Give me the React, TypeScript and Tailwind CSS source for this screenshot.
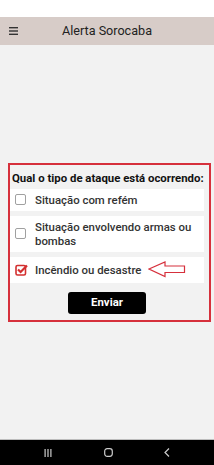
import React from 'react';

const options = [
  { label: 'Situação com refém', checked: false },
  { label: 'Situação envolvendo armas ou bombas', checked: false },
  { label: 'Incêndio ou desastre', checked: true },
];

const Checkbox: React.FC<{ checked: boolean }> = ({ checked }) =>
  checked ? (
    <svg className="shrink-0" width="13" height="12" viewBox="0 0 13 12">
      <rect x="1" y="1.5" width="9.5" height="9.5" rx="1.5" fill="none" stroke="#d32f2f" strokeWidth="1.6" />
      <path d="M3 5.5 L5.6 8 L12 1.5" fill="none" stroke="#d32f2f" strokeWidth="2.2" />
    </svg>
  ) : (
    <div className="w-[11px] h-[11px] shrink-0 rounded-[2px] border-[1.5px] border-[#a0a0a0] bg-white" />
  );

export default function App() {
  return (
    <div className="w-[214px] h-[465px] flex flex-col bg-[#f2f2f2] font-['Roboto',sans-serif] overflow-hidden">
      <div className="h-[17px] bg-white" />
      <header className="h-[28px] bg-[#d7ccc8] flex items-center px-[9px]">
        <svg width="9" height="8" viewBox="0 0 9 8">
          <rect x="0" y="0" width="9" height="1.4" fill="#333" />
          <rect x="0" y="3.3" width="9" height="1.4" fill="#333" />
          <rect x="0" y="6.6" width="9" height="1.4" fill="#333" />
        </svg>
        <h1 className="flex-1 text-center text-[12.6px] text-[#222] pr-[9px] leading-none">Alerta Sorocaba</h1>
      </header>

      <main className="flex-1 flex flex-col justify-center">
        <div className="ml-[8px] w-[203px] border-2 border-[#d6303c] pt-[6px] pb-[6px] flex flex-col">
          <p className="pl-[2px] text-[11.4px] font-bold text-[#111] leading-[14px] whitespace-nowrap">
            Qual o tipo de ataque está ocorrendo:
          </p>
          <div className="mt-[4px] flex flex-col gap-[5px]">
            {options.map((o, i) => (
              <div key={i} className="relative w-[194px] bg-white flex items-center gap-[9px] pl-[5px] pr-[6px] py-[4px]">
                <Checkbox checked={o.checked} />
                <span className={`text-[11.4px] font-medium text-[#333] leading-[14px] ${o.checked ? '-ml-[2px] py-[2px]' : ''}`}>{o.label}</span>
                {o.checked && (
                  <svg className="absolute left-[138px] top-[4px]" width="38" height="17" viewBox="0 0 38 17">
                    <path d="M1 8 L17 1 L17 5 L36.5 5 L36.5 11.5 L17 11.5 L17 15.5 Z" fill="none" stroke="#d6303c" strokeWidth="1.2" />
                  </svg>
                )}
              </div>
            ))}
          </div>
          <button className="mt-[9px] ml-[58px] w-[78px] h-[22px] rounded-[3px] bg-black text-white text-[11.4px] font-bold">
            Enviar
          </button>
        </div>
      </main>

      <div className="h-px bg-[#bdbdbd]" />
      <nav className="h-[25px] bg-black flex items-center justify-between px-[44px]">
        <svg width="8" height="8" viewBox="0 0 8 8">
          <rect x="0.5" y="0" width="1.2" height="8" fill="#ccc" />
          <rect x="3.4" y="0" width="1.2" height="8" fill="#ccc" />
          <rect x="6.3" y="0" width="1.2" height="8" fill="#ccc" />
        </svg>
        <svg width="9" height="9" viewBox="0 0 9 9">
          <rect x="0.7" y="0.7" width="7.6" height="7.6" rx="2.5" fill="none" stroke="#ccc" strokeWidth="1.2" />
        </svg>
        <svg width="6" height="9" viewBox="0 0 6 9">
          <path d="M5 0.5 L1 4.5 L5 8.5" fill="none" stroke="#ccc" strokeWidth="1.2" />
        </svg>
      </nav>
    </div>
  );
}
